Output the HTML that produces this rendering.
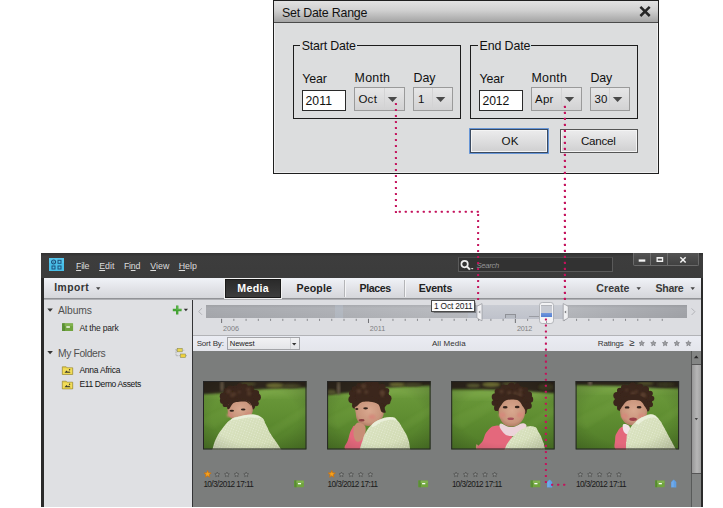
<!DOCTYPE html>
<html lang="en"><head><meta charset="utf-8"><title>Set Date Range</title>
<style>
html,body{margin:0;padding:0;background:#fff;}
body{width:723px;height:508px;overflow:hidden;position:relative;font-family:"Liberation Sans",sans-serif;}
.t{position:absolute;white-space:nowrap;line-height:1;}
.b{position:absolute;box-sizing:border-box;}
svg{position:absolute;overflow:visible;}
u{text-decoration:underline;}

</style></head>
<body>
<div class="b" style="left:273px;top:0px;width:386px;height:174px;background:#dcddde;border:1.2px solid #1e1e1e;box-shadow:inset 0 0 0 1px #eeeeef;"></div>
<div class="b" style="left:274px;top:1px;width:384px;height:22px;background:linear-gradient(#e2e2e2,#d0d0d0 45%,#a4a4a4);border-bottom:1px solid #4a4a4a;"></div>
<span class="t" id="t0" style="left:282.00px;top:7.10px;font-size:12.4px;color:#111;letter-spacing:-0.212px;">Set Date Range</span>
<svg style="left:639px;top:5px" width="13" height="14"><svg x="0.30" y="0.80" width="11.5" height="11.3" viewBox="0 0 11.5 11.3" overflow="visible"><path d="M1.1 1.1 L10.4 10.2 M10.4 1.1 L1.1 10.2" stroke="#262626" stroke-width="2.5" fill="none"/></svg></svg>
<div class="b" style="left:293px;top:45px;width:168px;height:74px;border:1.3px solid #1c1c1c;"></div>
<div class="b" style="left:300.3px;top:43px;width:56.3px;height:5px;background:#dcddde;"></div>
<span class="t" id="t1" style="left:301.80px;top:39.50px;font-size:12.4px;color:#111;letter-spacing:-0.190px;">Start Date</span>
<div class="b" style="left:470px;top:45px;width:168px;height:74px;border:1.3px solid #1c1c1c;"></div>
<div class="b" style="left:478.0px;top:43px;width:53.3px;height:5px;background:#dcddde;"></div>
<span class="t" id="t2" style="left:479.50px;top:39.50px;font-size:12.4px;color:#111;letter-spacing:-0.096px;">End Date</span>
<span class="t" id="t3" style="left:302.30px;top:72.60px;font-size:12.4px;color:#111;letter-spacing:-0.112px;">Year</span>
<span class="t" id="t4" style="left:354.60px;top:71.80px;font-size:12.4px;color:#111;letter-spacing:0.233px;">Month</span>
<span class="t" id="t5" style="left:413.60px;top:71.80px;font-size:12.4px;color:#111;letter-spacing:-0.149px;">Day</span>
<div class="b" style="left:302px;top:90px;width:44px;height:21px;border:1px solid #2a2a2a;background:#fff;"></div>
<span class="t" id="t6" style="left:305.50px;top:95.37px;font-size:12.2px;color:#111;letter-spacing:0.095px;">2011</span>
<div class="b" style="left:354px;top:87px;width:51px;height:24px;border:1px solid #9a9a9a;background:linear-gradient(#e6e6e7,#dcdcdd 50%,#d2d2d3);"></div>
<div class="b" style="left:384px;top:88px;width:1px;height:22px;background:#d3d3d4;"></div>
<span class="t" id="t7" style="left:358.40px;top:93.57px;font-size:11.5px;color:#111;letter-spacing:0.270px;">Oct</span>
<svg style="left:387px;top:97px" width="12" height="6"><svg x="0.80" y="0.00" width="9.4" height="5" viewBox="0 0 9.4 5" overflow="visible"><path d="M0 0 H9.4 L4.7 5 Z" fill="#4a4a4a"/></svg></svg>
<div class="b" style="left:413px;top:87px;width:40px;height:24px;border:1px solid #9a9a9a;background:linear-gradient(#e6e6e7,#dcdcdd 50%,#d2d2d3);"></div>
<div class="b" style="left:432px;top:88px;width:1px;height:22px;background:#d3d3d4;"></div>
<span class="t" id="t8" style="left:418.00px;top:93.57px;font-size:11.5px;color:#111;">1</span>
<svg style="left:435px;top:97px" width="12" height="6"><svg x="0.90" y="0.00" width="9.4" height="5" viewBox="0 0 9.4 5" overflow="visible"><path d="M0 0 H9.4 L4.7 5 Z" fill="#4a4a4a"/></svg></svg>
<span class="t" id="t9" style="left:479.50px;top:72.60px;font-size:12.4px;color:#111;letter-spacing:-0.112px;">Year</span>
<span class="t" id="t10" style="left:531.50px;top:71.80px;font-size:12.4px;color:#111;letter-spacing:0.233px;">Month</span>
<span class="t" id="t11" style="left:590.50px;top:71.80px;font-size:12.4px;color:#111;letter-spacing:-0.149px;">Day</span>
<div class="b" style="left:479px;top:90px;width:44px;height:21px;border:1px solid #2a2a2a;background:#fff;"></div>
<span class="t" id="t12" style="left:482.50px;top:95.37px;font-size:12.2px;color:#111;letter-spacing:-0.131px;">2012</span>
<div class="b" style="left:531px;top:87px;width:51px;height:24px;border:1px solid #9a9a9a;background:linear-gradient(#e6e6e7,#dcdcdd 50%,#d2d2d3);"></div>
<div class="b" style="left:561px;top:88px;width:1px;height:22px;background:#d3d3d4;"></div>
<span class="t" id="t13" style="left:535.00px;top:93.57px;font-size:11.5px;color:#111;letter-spacing:0.231px;">Apr</span>
<svg style="left:564px;top:97px" width="12" height="6"><svg x="0.80" y="0.00" width="9.4" height="5" viewBox="0 0 9.4 5" overflow="visible"><path d="M0 0 H9.4 L4.7 5 Z" fill="#4a4a4a"/></svg></svg>
<div class="b" style="left:590px;top:87px;width:40px;height:24px;border:1px solid #9a9a9a;background:linear-gradient(#e6e6e7,#dcdcdd 50%,#d2d2d3);"></div>
<div class="b" style="left:609px;top:88px;width:1px;height:22px;background:#d3d3d4;"></div>
<span class="t" id="t14" style="left:594.50px;top:93.57px;font-size:11.5px;color:#111;">30</span>
<svg style="left:612px;top:97px" width="12" height="6"><svg x="0.90" y="0.00" width="9.4" height="5" viewBox="0 0 9.4 5" overflow="visible"><path d="M0 0 H9.4 L4.7 5 Z" fill="#4a4a4a"/></svg></svg>
<div class="b" style="left:469.5px;top:128.7px;width:78.8px;height:24.3px;border:1px solid #3b4a60;box-shadow:0 0 0 .9px #5a8ed6,inset 0 0 0 1px #f4f4f4;background:linear-gradient(#ececed,#dededf 50%,#cfcfd0);"></div>
<span class="t" id="t15" style="left:501.50px;top:135.18px;font-size:11.6px;color:#111;letter-spacing:0.167px;">OK</span>
<div class="b" style="left:560px;top:128.7px;width:78px;height:24px;border:1px solid #555;background:linear-gradient(#ececed,#dededf 50%,#cfcfd0);box-shadow:inset 0 0 0 1px #f4f4f4;"></div>
<span class="t" id="t16" style="left:581.00px;top:135.18px;font-size:11.6px;color:#111;letter-spacing:-0.249px;">Cancel</span>
<div class="b" style="left:41.2px;top:253.2px;width:661.8px;height:253.40000000000003px;background:#2b2b2b;"></div>
<div class="b" style="left:41.2px;top:253.2px;width:661.8px;height:24.6px;background:linear-gradient(#303030,#3d3d3d 14%,#3b3b3b);"></div>
<svg style="left:49px;top:258px" width="15" height="13" viewBox="0 0 15 13"><rect width="15" height="13" fill="#48bfe9"/><rect width="15" height="5" fill="#5fcbf0" opacity=".6"/><g fill="none" stroke="#1d4f7a" stroke-width="1"><circle cx="4.6" cy="4" r="2" stroke-width="1.2"/><circle cx="4.6" cy="4" r=".6" fill="#1d4f7a" stroke="none"/><rect x="9" y="2.3" width="3" height="3"/><rect x="3" y="8" width="3" height="3"/><rect x="9" y="8" width="3" height="3"/></g></svg>
<span class="t" id="t17" style="left:76.10px;top:261.65px;font-size:8.8px;color:#dcdcdc;letter-spacing:-0.297px;"><u>F</u>ile</span>
<span class="t" id="t18" style="left:99.20px;top:261.65px;font-size:8.8px;color:#dcdcdc;letter-spacing:0.032px;"><u>E</u>dit</span>
<span class="t" id="t19" style="left:123.90px;top:261.65px;font-size:8.8px;color:#dcdcdc;letter-spacing:-0.210px;">Fi<u>n</u>d</span>
<span class="t" id="t20" style="left:150.30px;top:261.65px;font-size:8.8px;color:#dcdcdc;letter-spacing:0.020px;"><u>V</u>iew</span>
<span class="t" id="t21" style="left:178.70px;top:261.65px;font-size:8.8px;color:#dcdcdc;letter-spacing:0.023px;"><u>H</u>elp</span>
<div class="b" style="left:457.5px;top:257.2px;width:155px;height:15.2px;background:#323232;border:1px solid #5a5a5a;border-top-color:#4a4a4a;"></div>
<svg style="left:460px;top:259px" width="16" height="14"><svg x="0.30" y="0.80" width="14" height="12" viewBox="0 0 14 12" overflow="visible"><circle cx="4.3" cy="4.3" r="3.2" fill="none" stroke="#ececec" stroke-width="1.7"/><path d="M6.6 6.6 L9.6 9.8" stroke="#ececec" stroke-width="2.1"/><path d="M10.6 8.2 h2.6 l-1.3 1.6z" fill="#ddd"/></svg></svg>
<span class="t" id="t22" style="left:476.40px;top:261.77px;font-size:7.6px;color:#959595;letter-spacing:-0.244px;font-style:italic;">Search</span>
<div class="b" style="left:632.5px;top:253px;width:66.5px;height:12.5px;background:linear-gradient(#535353,#414141);border:1px solid #6a6a6a;border-top:none;border-radius:0 0 2px 2px;"></div>
<div class="b" style="left:650px;top:253px;width:1px;height:12px;background:#6e6e6e;"></div>
<div class="b" style="left:667px;top:253px;width:1px;height:12px;background:#6e6e6e;"></div>
<svg style="left:638px;top:259px" width="9" height="4"><svg x="0.70" y="0.40" width="6.6" height="2.3" viewBox="0 0 6.6 2.3" overflow="visible"><rect width="6.6" height="2.3" fill="#f2f2f2"/></svg></svg>
<svg style="left:656px;top:257px" width="9" height="6"><svg x="0.50" y="0.10" width="6.7" height="4.8" viewBox="0 0 6.7 4.8" overflow="visible"><path d="M0 0H6.7V4.8H0Z M1.3 1.6V3.5H5.4V1.6Z" fill="#f2f2f2" fill-rule="evenodd"/></svg></svg>
<svg style="left:679px;top:256px" width="9" height="9"><svg x="0.20" y="0.80" width="7.6" height="6.2" viewBox="0 0 8 7" overflow="visible"><path d="M1 0.6 L7 6.4 M7 0.6 L1 6.4" stroke="#f4f4f4" stroke-width="1.7" fill="none"/></svg></svg>
<div class="b" style="left:43.7px;top:277.7px;width:657.3px;height:21px;background:linear-gradient(#f0f2f7,#e3e4e9 45%,#d4d5d9);"></div>
<div class="b" style="left:43.5px;top:298px;width:657.5px;height:2px;background:linear-gradient(#88898d,#9a9b9f 50%,#c4c5c9);"></div>
<span class="t" id="t23" style="left:54.20px;top:283.18px;font-size:10.3px;color:#333;font-weight:bold;letter-spacing:0.476px;">Import</span>
<svg style="left:96px;top:287px" width="6" height="4"><svg x="0.00" y="0.30" width="4.4" height="2.6" viewBox="0 0 4.4 2.6" overflow="visible"><path d="M0 0H4.4L2.2 2.6Z" fill="#444"/></svg></svg>
<div class="b" style="left:225px;top:278.5px;width:56px;height:19.5px;background:linear-gradient(#2a2a2a,#3d3d3d);border:1px solid #1a1a1a;box-shadow:0 0 0 1px #f2f2f2;"></div>
<span class="t" id="t24" style="left:237.30px;top:283.43px;font-size:10.6px;color:#fff;font-weight:bold;letter-spacing:0.334px;">Media</span>
<span class="t" id="t25" style="left:296.50px;top:283.43px;font-size:10.6px;color:#222;font-weight:bold;letter-spacing:0.125px;">People</span>
<span class="t" id="t26" style="left:359.50px;top:283.43px;font-size:10.6px;color:#222;font-weight:bold;letter-spacing:-0.363px;">Places</span>
<span class="t" id="t27" style="left:418.70px;top:283.43px;font-size:10.6px;color:#222;font-weight:bold;letter-spacing:-0.225px;">Events</span>
<div class="b" style="left:344.3px;top:280px;width:1px;height:17px;background:#b4b5b8;"></div>
<div class="b" style="left:345.3px;top:280px;width:1px;height:17px;background:#f4f4f6;"></div>
<div class="b" style="left:404.0px;top:280px;width:1px;height:17px;background:#b4b5b8;"></div>
<div class="b" style="left:405.0px;top:280px;width:1px;height:17px;background:#f4f4f6;"></div>
<span class="t" id="t28" style="left:596.30px;top:282.83px;font-size:10.6px;color:#3a3a3a;font-weight:bold;letter-spacing:0.036px;">Create</span>
<svg style="left:636px;top:287px" width="6" height="4"><svg x="0.50" y="0.30" width="4.4" height="2.6" viewBox="0 0 4.4 2.6" overflow="visible"><path d="M0 0H4.4L2.2 2.6Z" fill="#444"/></svg></svg>
<span class="t" id="t29" style="left:655.60px;top:282.83px;font-size:10.6px;color:#3a3a3a;font-weight:bold;letter-spacing:-0.331px;">Share</span>
<svg style="left:690px;top:287px" width="6" height="4"><svg x="0.50" y="0.30" width="4.4" height="2.6" viewBox="0 0 4.4 2.6" overflow="visible"><path d="M0 0H4.4L2.2 2.6Z" fill="#444"/></svg></svg>
<div class="b" style="left:43.5px;top:299.5px;width:149px;height:207px;background:#dfe0e3;"></div>
<div class="b" style="left:191.9px;top:299.5px;width:1.2px;height:207px;background:#343436;"></div>
<svg style="left:47px;top:308px" width="7" height="5"><svg x="0.30" y="0.60" width="5.6" height="3.2" viewBox="0 0 5.6 3.2" overflow="visible"><path d="M0 0H5.6L2.8 3.2Z" fill="#333"/></svg></svg>
<span class="t" id="t30" style="left:58.10px;top:305.78px;font-size:10.3px;color:#505050;letter-spacing:-0.091px;">Albums</span>
<svg style="left:47px;top:351px" width="7" height="5"><svg x="0.30" y="0.00" width="5.6" height="3.2" viewBox="0 0 5.6 3.2" overflow="visible"><path d="M0 0H5.6L2.8 3.2Z" fill="#333"/></svg></svg>
<span class="t" id="t31" style="left:58.10px;top:348.58px;font-size:10.3px;color:#505050;letter-spacing:-0.382px;">My Folders</span>
<svg style="left:62px;top:323px" width="13" height="10"><svg x="0.10" y="0.30" width="11" height="7.7" viewBox="0 0 11 7.7" overflow="visible"><rect width="11" height="7.7" rx="0.5" fill="#70a43e"/><rect x="0" y="0" width="2.1" height="7.7" fill="#5a8f36"/><rect x="1.9" y="0" width=".5" height="7.7" fill="#4a7a2c"/><rect x="2.4" y="0.3" width="8.3" height="2.6" fill="#8cbc5a" opacity=".6"/><rect x="4.2" y="3" width="3.6" height="1.4" fill="#fff"/></svg></svg>
<span class="t" id="t32" style="left:79.40px;top:323.80px;font-size:8.5px;color:#222;letter-spacing:-0.183px;">At the park</span>
<svg style="left:62px;top:365px" width="12" height="11"><svg x="0.00" y="0.80" width="11" height="9" viewBox="0 0 11 9" overflow="visible"><path d="M0.3 1 H4.2 L5 2 H10.7 V8.7 H0.3Z" fill="#e8cf45" stroke="#8c7a22" stroke-width=".6"/><rect x="1" y="2.6" width="9" height="5.4" fill="#f1dc58"/><path d="M2.5 7 L4.5 4.8 L6 6.2 L7 5.4 L8.6 7Z" fill="#3a3a2a"/><circle cx="7.6" cy="4" r=".7" fill="#3a3a2a"/></svg></svg>
<span class="t" id="t33" style="left:79.40px;top:365.70px;font-size:8.5px;color:#141414;letter-spacing:-0.235px;">Anna Africa</span>
<svg style="left:62px;top:380px" width="12" height="11"><svg x="0.00" y="0.20" width="11" height="9" viewBox="0 0 11 9" overflow="visible"><path d="M0.3 1 H4.2 L5 2 H10.7 V8.7 H0.3Z" fill="#e8cf45" stroke="#8c7a22" stroke-width=".6"/><rect x="1" y="2.6" width="9" height="5.4" fill="#f1dc58"/><path d="M2.5 7 L4.5 4.8 L6 6.2 L7 5.4 L8.6 7Z" fill="#3a3a2a"/><circle cx="7.6" cy="4" r=".7" fill="#3a3a2a"/></svg></svg>
<span class="t" id="t34" style="left:79.40px;top:380.10px;font-size:8.5px;color:#141414;letter-spacing:-0.369px;">E11 Demo Assets</span>
<svg style="left:172px;top:305px" width="17" height="11"><svg x="0.80" y="0.60" width="15" height="9" viewBox="0 0 15 9" overflow="visible"><path d="M3.2 0 H5.6 V3.2 H8.8 V5.6 H5.6 V8.8 H3.2 V5.6 H0 V3.2 H3.2Z" fill="#44a234"/><path d="M3.5 0.3 H5.3 V3.5 H8.5 V4.4 H3.5Z" fill="#6cc45a" opacity=".5"/><path d="M11 3.2 h4.2 l-2.1 2.4z" fill="#2e2e2e"/></svg></svg>
<svg style="left:175px;top:348px" width="12" height="10" viewBox="0 0 12 10"><rect x="2.2" y="0.4" width="5" height="3.4" fill="#ecd64e" stroke="#8d8d50" stroke-width=".6"/><rect x="5.6" y="6" width="5" height="3.4" fill="#f0d23c" stroke="#8d8d50" stroke-width=".6"/><path d="M1 1 V7.7 H5.2 M1 2.2 H2 M7.6 2.2 H9.4 M11 7.7 h1" stroke="#8a8a8a" stroke-width=".7" stroke-dasharray=".9 .7" fill="none"/></svg>
<div class="b" style="left:193.1px;top:299.5px;width:507.9px;height:36px;background:#dcdde1;"></div>
<svg style="left:198px;top:307px" width="6" height="10"><svg x="0.00" y="0.80" width="4.4" height="7.4" viewBox="0 0 4.4 7.4" overflow="visible"><path d="M4 0.4 L0.7 3.7 L4 7" fill="none" stroke="#b2b3b8" stroke-width="1"/></svg></svg>
<svg style="left:691px;top:308px" width="6" height="9"><svg x="0.20" y="0.00" width="4.4" height="7.4" viewBox="0 0 4.4 7.4" overflow="visible"><path d="M0.4 0.4 L3.7 3.7 L0.4 7" fill="none" stroke="#b2b3b8" stroke-width="1"/></svg></svg>
<div class="b" style="left:206px;top:305px;width:275px;height:13px;background:linear-gradient(rgba(0,0,0,.06),rgba(0,0,0,0) 25%,rgba(0,0,0,.03)),linear-gradient(90deg,#a8aaaf,#b0b2b7 45%,#bcbec3);"></div>
<div class="b" style="left:563px;top:305px;width:123.5px;height:13px;background:linear-gradient(rgba(0,0,0,.06),rgba(0,0,0,0) 25%,rgba(0,0,0,.03)),linear-gradient(90deg,#b7b9be,#aaacb1 60%,#a3a5aa);"></div>
<div class="b" style="left:334.5px;top:305px;width:8.5px;height:13px;background:rgba(190,202,218,.3);"></div>
<div class="b" style="left:468px;top:305px;width:13px;height:13px;background:rgba(190,202,218,.28);"></div>
<div class="b" style="left:481px;top:305px;width:82.5px;height:13.8px;background:linear-gradient(#c9ccd3,#bfc2cb);"></div>
<div class="b" style="left:505px;top:313.9px;width:10.8px;height:4.6px;border:1px solid #8f9197;border-bottom:none;background:#b6bac2;"></div>
<div class="b" style="left:529px;top:315.6px;width:10.4px;height:1.6px;background:#9a9ca3;"></div>
<svg style="left:0;top:0" width="723" height="508"><rect x="221.10" y="318.8" width="1" height="4.2" fill="#707175"/><rect x="233.34" y="318.8" width="1" height="2.1" fill="#88898d"/><rect x="245.58" y="318.8" width="1" height="2.1" fill="#88898d"/><rect x="257.82" y="318.8" width="1" height="2.1" fill="#88898d"/><rect x="270.06" y="318.8" width="1" height="2.1" fill="#88898d"/><rect x="282.30" y="318.8" width="1" height="2.1" fill="#88898d"/><rect x="294.54" y="318.8" width="1" height="2.1" fill="#88898d"/><rect x="306.78" y="318.8" width="1" height="2.1" fill="#88898d"/><rect x="319.02" y="318.8" width="1" height="2.1" fill="#88898d"/><rect x="331.26" y="318.8" width="1" height="2.1" fill="#88898d"/><rect x="343.50" y="318.8" width="1" height="2.1" fill="#88898d"/><rect x="355.74" y="318.8" width="1" height="2.1" fill="#88898d"/><rect x="367.98" y="318.8" width="1" height="4.2" fill="#707175"/><rect x="380.22" y="318.8" width="1" height="2.1" fill="#88898d"/><rect x="392.46" y="318.8" width="1" height="2.1" fill="#88898d"/><rect x="404.70" y="318.8" width="1" height="2.1" fill="#88898d"/><rect x="416.94" y="318.8" width="1" height="2.1" fill="#88898d"/><rect x="429.18" y="318.8" width="1" height="2.1" fill="#88898d"/><rect x="441.42" y="318.8" width="1" height="2.1" fill="#88898d"/><rect x="453.66" y="318.8" width="1" height="2.1" fill="#88898d"/><rect x="465.90" y="318.8" width="1" height="2.1" fill="#88898d"/><rect x="478.14" y="318.8" width="1" height="2.1" fill="#88898d"/><rect x="490.38" y="318.8" width="1" height="2.1" fill="#88898d"/><rect x="502.62" y="318.8" width="1" height="2.1" fill="#88898d"/><rect x="514.86" y="318.8" width="1" height="4.2" fill="#707175"/><rect x="527.10" y="318.8" width="1" height="2.1" fill="#88898d"/><rect x="563.82" y="318.8" width="1" height="2.1" fill="#88898d"/><rect x="576.06" y="318.8" width="1" height="2.1" fill="#88898d"/><rect x="588.30" y="318.8" width="1" height="2.1" fill="#88898d"/><rect x="600.54" y="318.8" width="1" height="2.1" fill="#88898d"/><rect x="612.78" y="318.8" width="1" height="2.1" fill="#88898d"/><rect x="625.02" y="318.8" width="1" height="2.1" fill="#88898d"/><rect x="637.26" y="318.8" width="1" height="2.1" fill="#88898d"/><rect x="649.50" y="318.8" width="1" height="2.1" fill="#88898d"/><rect x="661.74" y="318.8" width="1" height="2.1" fill="#88898d"/></svg>
<span class="t" id="t35" style="left:222.90px;top:324.51px;font-size:7.2px;color:#7e7f83;letter-spacing:0.050px;">2006</span>
<span class="t" id="t36" style="left:369.80px;top:324.51px;font-size:7.2px;color:#7e7f83;letter-spacing:0.033px;">2011</span>
<span class="t" id="t37" style="left:516.90px;top:324.51px;font-size:7.2px;color:#7e7f83;letter-spacing:-0.175px;">2012</span>
<svg style="left:476px;top:303px" width="8" height="20"><svg x="0.40" y="0.20" width="6" height="18" viewBox="0 0 6 18" overflow="visible"><path d="M5.6 0.4 V17.6 L1.4 15.4 Q0.5 14.8 0.5 13.6 V4.4 Q0.5 3.2 1.4 2.6Z" fill="#f1f1f3" stroke="#9a9ca1" stroke-width=".8"/><path d="M3.9 7.2 L2 8.8 L3.9 10.4Z" fill="#8a8b8f"/></svg></svg>
<svg style="left:562px;top:303px" width="8" height="20"><svg x="0.80" y="0.20" width="6" height="18" viewBox="0 0 6 18" overflow="visible"><path d="M0.4 0.4 V17.6 L4.6 15.4 Q5.5 14.8 5.5 13.6 V4.4 Q5.5 3.2 4.6 2.6Z" fill="#f1f1f3" stroke="#9a9ca1" stroke-width=".8"/><path d="M3.4 7.2 L1.5 8.8 L3.4 10.4Z" fill="#77787c"/></svg></svg>
<div class="b" style="left:539.2px;top:302.4px;width:15.2px;height:21.8px;border:1.2px solid #b3b5ba;border-radius:3.2px;background:#f3f3f5;"></div>
<div class="b" style="left:541.3px;top:304.6px;width:11px;height:8.6px;background:#c7cad2;border-top:1px solid #b2b4ba;"></div>
<div class="b" style="left:541.3px;top:313px;width:11px;height:4.4px;background:linear-gradient(#7397dd,#5580d1);"></div>
<div class="b" style="left:546.3px;top:320.5px;width:1px;height:2px;background:#9a9ba0;"></div>
<div class="b" style="left:431px;top:300px;width:44px;height:12px;background:#fdfdfd;border:1px solid #4a4a4a;box-shadow:0.5px 0.5px 1px rgba(0,0,0,.35);"></div>
<span class="t" id="t38" style="left:433.90px;top:302.19px;font-size:8.4px;color:#222;letter-spacing:-0.166px;">1 Oct 2011</span>
<div class="b" style="left:193.1px;top:335px;width:507.9px;height:16px;background:linear-gradient(#eaecf3,#e4e5eb);border-top:1px solid #b2b3b7;"></div>
<span class="t" id="t39" style="left:196.70px;top:339.73px;font-size:8px;color:#333;letter-spacing:-0.182px;">Sort By:</span>
<div class="b" style="left:227.3px;top:337px;width:72.7px;height:13px;background:linear-gradient(#f2f2f4,#e4e5e8);border:1px solid #a3a4a8;"></div>
<div class="b" style="left:289.5px;top:338px;width:1px;height:11px;background:#d2d3d6;"></div>
<span class="t" id="t40" style="left:229.80px;top:339.87px;font-size:7.6px;color:#222;letter-spacing:-0.088px;">Newest</span>
<svg style="left:292px;top:343px" width="4.4" height="2.6" viewBox="0 0 4.4 2.6"><path d="M0 0H4.4L2.2 2.6Z" fill="#333"/></svg>
<span class="t" id="t41" style="left:431.90px;top:339.73px;font-size:8px;color:#333;letter-spacing:0.110px;">All Media</span>
<span class="t" id="t42" style="left:597.80px;top:339.73px;font-size:8px;color:#333;letter-spacing:-0.189px;">Ratings</span>
<span class="t" id="t43" style="left:629.30px;top:338.27px;font-size:9.6px;color:#2e2e2e;">≥</span>
<svg style="left:0;top:0" width="723" height="508"><polygon points="641.70,340.70 642.44,342.48 644.36,342.63 642.90,343.89 643.35,345.77 641.70,344.76 640.05,345.77 640.50,343.89 639.04,342.63 640.96,342.48" fill="#9c9da1" stroke="#808185" stroke-width=".75" stroke-linejoin="round"/><polygon points="653.40,340.70 654.14,342.48 656.06,342.63 654.60,343.89 655.05,345.77 653.40,344.76 651.75,345.77 652.20,343.89 650.74,342.63 652.66,342.48" fill="#9c9da1" stroke="#808185" stroke-width=".75" stroke-linejoin="round"/><polygon points="665.10,340.70 665.84,342.48 667.76,342.63 666.30,343.89 666.75,345.77 665.10,344.76 663.45,345.77 663.90,343.89 662.44,342.63 664.36,342.48" fill="#9c9da1" stroke="#808185" stroke-width=".75" stroke-linejoin="round"/><polygon points="676.80,340.70 677.54,342.48 679.46,342.63 678.00,343.89 678.45,345.77 676.80,344.76 675.15,345.77 675.60,343.89 674.14,342.63 676.06,342.48" fill="#9c9da1" stroke="#808185" stroke-width=".75" stroke-linejoin="round"/><polygon points="688.50,340.70 689.24,342.48 691.16,342.63 689.70,343.89 690.15,345.77 688.50,344.76 686.85,345.77 687.30,343.89 685.84,342.63 687.76,342.48" fill="#9c9da1" stroke="#808185" stroke-width=".75" stroke-linejoin="round"/></svg>
<div class="b" style="left:193.1px;top:351px;width:507.9px;height:155.5px;background:#7b7d7c;"></div>
<div class="b" style="left:691px;top:351px;width:10px;height:155.5px;background:#838584;border-left:1px solid #585a59;"></div>
<svg style="left:693px;top:355px" width="7" height="5"><svg x="0.90" y="0.60" width="4.7" height="2.6" viewBox="0 0 4.7 2.6" overflow="visible"><path d="M0 2.6H4.7L2.35 0Z" fill="#262626"/></svg></svg>
<div class="b" style="left:691px;top:364px;width:10px;height:109.5px;background:linear-gradient(90deg,#979797,#b6b6b6 55%,#a2a2a2);border:1px solid #555;border-right:none;"></div>
<svg style="left:694px;top:418px" width="6" height="4"><svg x="0.60" y="0.00" width="3.4" height="2.2" viewBox="0 0 3.4 2.2" overflow="visible"><path d="M0 0H3.4L1.7 2.2Z" fill="#444"/></svg></svg>
<svg width="0" height="0" style="left:0;top:0"><defs><filter id="bl0" x="-20%" y="-20%" width="140%" height="140%"><feGaussianBlur stdDeviation="0.45"/></filter><filter id="bl1" x="-20%" y="-20%" width="140%" height="140%"><feGaussianBlur stdDeviation="0.8"/></filter><filter id="bl2" x="-30%" y="-30%" width="160%" height="160%"><feGaussianBlur stdDeviation="1.7"/></filter><filter id="bl3" x="-30%" y="-30%" width="160%" height="160%"><feGaussianBlur stdDeviation="3"/></filter><linearGradient id="gr" x1="0" y1="0" x2="0" y2="1"><stop offset="0" stop-color="#709e3e"/><stop offset=".5" stop-color="#608e32"/><stop offset="1" stop-color="#507c28"/></linearGradient><linearGradient id="bk" x1="0" y1="0" x2="1" y2="1"><stop offset="0" stop-color="#dde5c6"/><stop offset=".6" stop-color="#d0dab2"/><stop offset="1" stop-color="#c2cfa2"/></linearGradient><pattern id="dt" width="2.6" height="2.6" patternUnits="userSpaceOnUse" patternTransform="rotate(20)"><circle cx="1.3" cy="1.3" r=".55" fill="#f4f7ea"/></pattern><radialGradient id="vg" cx=".5" cy=".5" r=".75"><stop offset=".55" stop-color="#000" stop-opacity="0"/><stop offset="1" stop-color="#000" stop-opacity=".22"/></radialGradient><radialGradient id="sk" cx=".5" cy=".45" r=".6"><stop offset="0" stop-color="#d9a88f"/><stop offset=".7" stop-color="#c9957c"/><stop offset="1" stop-color="#a8735c"/></radialGradient></defs></svg>
<svg style="left:203.0px;top:381px" width="103.5" height="68.5" viewBox="0 0 103.5 68.5"><defs><clipPath id="pc1"><rect width="103.5" height="68.5"/></clipPath></defs><g clip-path="url(#pc1)"><rect width="103.5" height="68.5" fill="url(#gr)"/><path d="M-5 40 L60 8 L75 8 L10 48Z M30 70 L108 22 L108 30 L48 70Z" fill="#8ab554" opacity=".13" filter="url(#bl2)"/><ellipse cx="50.0" cy="10.0" rx="60" ry="5" fill="#7aa646" filter="url(#bl3)"/><path d="M-3 -3 L107 -3 L107 6.5 L70 7.5 L50 9 L30 11.5 L-3 13.5Z" fill="#2e281b" filter="url(#bl1)" /><ellipse cx="72.0" cy="4.5" rx="9" ry="2.6" fill="#6b6a33" filter="url(#bl1)"/><ellipse cx="88.0" cy="5.0" rx="10" ry="2.2" fill="#4d4c2a" filter="url(#bl1)"/><ellipse cx="19.0" cy="5.0" rx="1.6" ry="6" fill="#6b5d48" filter="url(#bl1)"/><ellipse cx="45.0" cy="3.0" rx="8" ry="2" fill="#4a4526" filter="url(#bl1)"/><ellipse cx="37.2" cy="17.0" rx="18.6" ry="13.020000000000001" fill="#3b271b" filter="url(#bl0)"/><circle cx="54.3" cy="16.2" r="3.6" fill="#3b271b" filter="url(#bl0)"/><circle cx="52.9" cy="22.3" r="2.9" fill="#3b271b" filter="url(#bl0)"/><circle cx="48.9" cy="25.5" r="3.1" fill="#3b271b" filter="url(#bl0)"/><circle cx="42.0" cy="27.7" r="3.5" fill="#3b271b" filter="url(#bl0)"/><circle cx="36.8" cy="28.9" r="2.6" fill="#3b271b" filter="url(#bl0)"/><circle cx="27.5" cy="26.6" r="3.1" fill="#3b271b" filter="url(#bl0)"/><circle cx="22.2" cy="23.5" r="2.6" fill="#3b271b" filter="url(#bl0)"/><circle cx="20.4" cy="19.5" r="3.5" fill="#3b271b" filter="url(#bl0)"/><circle cx="20.4" cy="15.3" r="3.7" fill="#3b271b" filter="url(#bl0)"/><circle cx="23.6" cy="9.3" r="2.6" fill="#3b271b" filter="url(#bl0)"/><circle cx="27.1" cy="7.7" r="3.2" fill="#3b271b" filter="url(#bl0)"/><circle cx="36.9" cy="5.4" r="3.1" fill="#3b271b" filter="url(#bl0)"/><circle cx="41.7" cy="5.9" r="3.1" fill="#3b271b" filter="url(#bl0)"/><circle cx="47.8" cy="7.6" r="2.9" fill="#3b271b" filter="url(#bl0)"/><circle cx="53.0" cy="12.2" r="3.2" fill="#3b271b" filter="url(#bl0)"/><circle cx="31.7" cy="12.9" r="1.7" fill="#5d4230" opacity=".7" filter="url(#bl1)"/><circle cx="36.2" cy="11.0" r="1.5" fill="#5d4230" opacity=".7" filter="url(#bl1)"/><circle cx="46.2" cy="12.5" r="2.2" fill="#5d4230" opacity=".7" filter="url(#bl1)"/><circle cx="25.6" cy="10.4" r="2.4" fill="#5d4230" opacity=".7" filter="url(#bl1)"/><circle cx="29.3" cy="14.0" r="2.3" fill="#5d4230" opacity=".7" filter="url(#bl1)"/><circle cx="45.3" cy="8.6" r="2.0" fill="#5d4230" opacity=".7" filter="url(#bl1)"/><path d="M24.6 29.0C24.6 26.7 25.0 23.3 27.1 21.6C29.1 19.8 33.8 18.6 37.0 18.6C40.2 18.5 44.0 19.6 46.1 21.2C48.3 22.8 49.5 26.1 49.8 28.2C50.1 30.3 49.3 32.3 48.1 34.0C47.0 35.7 45.4 37.6 42.8 38.5C40.3 39.4 35.6 40.0 32.9 39.5C30.2 39.0 27.9 37.4 26.6 35.7C25.2 33.9 24.5 31.4 24.6 29.0Z" fill="url(#sk)" filter="url(#bl0)" /><path d="M24.2 26.6C24.5 25.2 25.8 21.4 27.9 19.9C30.0 18.4 34.2 17.4 37.0 17.4C39.8 17.4 42.6 18.7 44.5 19.9C46.3 21.1 48.4 24.4 48.1 24.6C47.9 24.7 45.1 21.4 43.2 20.7C41.2 20.1 38.3 20.5 36.2 20.7C34.1 21.0 32.0 20.9 30.4 22.1C28.7 23.3 27.2 27.1 26.2 27.9C25.2 28.6 24.0 27.9 24.2 26.6Z" fill="#3b271b" filter="url(#bl0)" /><ellipse cx="28.8" cy="29.7" rx="2.3" ry="1.0" fill="#33241c" filter="url(#bl0)"/><ellipse cx="40.2" cy="28.5" rx="2.3" ry="1.0" fill="#33241c" filter="url(#bl0)"/><ellipse cx="27.0" cy="34.0" rx="3" ry="2" fill="#d08a7a" filter="url(#bl1)"/><ellipse cx="45.0" cy="33.5" rx="3" ry="2" fill="#d08a7a" filter="url(#bl1)"/><path d="M4.9 81.8C6.1 73.0 7.2 75.2 9.3 68.9C11.4 62.6 10.2 63.8 12.9 58.1C15.7 52.3 15.6 52.5 19.6 47.3C23.6 42.1 23.5 41.7 27.9 38.5C32.3 35.3 30.4 36.7 36.2 35.4C41.9 34.0 43.5 33.2 49.5 33.5C55.4 33.8 55.0 33.9 58.6 36.5C62.1 39.1 60.3 38.7 62.7 43.2C65.2 47.6 64.8 48.2 67.7 53.1C70.6 58.0 70.7 57.2 73.5 61.4C76.4 65.6 75.6 64.5 78.5 68.9C81.4 73.3 82.9 70.1 84.5 77.8C86.1 85.6 105.7 91.4 84.5 97.8C63.3 104.2 26.1 106.1 4.9 101.8C-16.3 97.6 3.7 90.6 4.9 81.8Z" fill="url(#bk)" filter="url(#bl0)" /><path d="M4.9 81.8C6.1 73.0 7.2 75.2 9.3 68.9C11.4 62.6 10.2 63.8 12.9 58.1C15.7 52.3 15.6 52.5 19.6 47.3C23.6 42.1 23.5 41.7 27.9 38.5C32.3 35.3 30.4 36.7 36.2 35.4C41.9 34.0 43.5 33.2 49.5 33.5C55.4 33.8 55.0 33.9 58.6 36.5C62.1 39.1 60.3 38.7 62.7 43.2C65.2 47.6 64.8 48.2 67.7 53.1C70.6 58.0 70.7 57.2 73.5 61.4C76.4 65.6 75.6 64.5 78.5 68.9C81.4 73.3 82.9 70.1 84.5 77.8C86.1 85.6 105.7 91.4 84.5 97.8C63.3 104.2 26.1 106.1 4.9 101.8C-16.3 97.6 3.7 90.6 4.9 81.8Z" fill="url(#dt)" opacity=".55"/><path d="M27.9 38.5C28.2 38.0 32.6 36.2 36.2 35.4C39.8 34.5 45.7 33.3 49.5 33.5C53.2 33.7 57.8 36.0 58.6 36.5C59.4 37.1 56.8 36.8 54.4 36.8C52.1 36.8 47.8 36.2 44.5 36.5C41.2 36.8 37.3 38.2 34.5 38.5C31.8 38.8 27.6 39.0 27.9 38.5Z" fill="#eef2e0" filter="url(#bl0)" opacity=".8"/><rect width="103.5" height="68.5" fill="url(#vg)"/></g><rect x=".5" y=".5" width="102.5" height="67.5" fill="none" stroke="#242424" stroke-width="1"/></svg>
<svg style="left:327px;top:381px" width="105" height="70"><svg x="0.10" y="0.00" width="103.5" height="68.5" viewBox="0 0 103.5 68.5" overflow="visible"><defs><clipPath id="pc2"><rect width="103.5" height="68.5"/></clipPath></defs><g clip-path="url(#pc2)"><rect width="103.5" height="68.5" fill="url(#gr)"/><path d="M-5 40 L60 8 L75 8 L10 48Z M30 70 L108 22 L108 30 L48 70Z" fill="#8ab554" opacity=".13" filter="url(#bl2)"/><ellipse cx="50.0" cy="9.0" rx="60" ry="5" fill="#7aa646" filter="url(#bl3)"/><path d="M-3 -3 L107 -3 L107 4.5 L75 5.5 L55 7 L30 11 L-3 14Z" fill="#2e281b" filter="url(#bl1)" /><ellipse cx="70.0" cy="3.5" rx="8" ry="2" fill="#6b6a33" filter="url(#bl1)"/><ellipse cx="86.0" cy="3.5" rx="9" ry="1.8" fill="#4d4c2a" filter="url(#bl1)"/><ellipse cx="11.5" cy="7.0" rx="1.7" ry="7" fill="#6b5d48" filter="url(#bl1)"/><ellipse cx="4.0" cy="11.0" rx="5" ry="2.5" fill="#5a5a30" filter="url(#bl1)"/><ellipse cx="42.8" cy="16.2" rx="19.53" ry="15.159" fill="#3b271b" filter="url(#bl0)"/><circle cx="60.7" cy="17.4" r="3.7" fill="#3b271b" filter="url(#bl0)"/><circle cx="60.6" cy="20.8" r="2.7" fill="#3b271b" filter="url(#bl0)"/><circle cx="54.1" cy="26.8" r="3.5" fill="#3b271b" filter="url(#bl0)"/><circle cx="48.0" cy="29.6" r="3.0" fill="#3b271b" filter="url(#bl0)"/><circle cx="40.5" cy="29.7" r="3.3" fill="#3b271b" filter="url(#bl0)"/><circle cx="33.2" cy="28.3" r="2.8" fill="#3b271b" filter="url(#bl0)"/><circle cx="28.0" cy="24.5" r="3.1" fill="#3b271b" filter="url(#bl0)"/><circle cx="25.1" cy="18.4" r="3.8" fill="#3b271b" filter="url(#bl0)"/><circle cx="25.2" cy="12.2" r="3.3" fill="#3b271b" filter="url(#bl0)"/><circle cx="27.6" cy="8.1" r="2.9" fill="#3b271b" filter="url(#bl0)"/><circle cx="31.9" cy="4.6" r="2.6" fill="#3b271b" filter="url(#bl0)"/><circle cx="40.7" cy="2.4" r="3.0" fill="#3b271b" filter="url(#bl0)"/><circle cx="48.0" cy="3.4" r="3.7" fill="#3b271b" filter="url(#bl0)"/><circle cx="55.2" cy="6.1" r="3.3" fill="#3b271b" filter="url(#bl0)"/><circle cx="59.6" cy="9.7" r="2.6" fill="#3b271b" filter="url(#bl0)"/><circle cx="39.2" cy="11.0" r="2.1" fill="#5d4230" opacity=".7" filter="url(#bl1)"/><circle cx="55.3" cy="14.6" r="1.7" fill="#5d4230" opacity=".7" filter="url(#bl1)"/><circle cx="55.2" cy="11.5" r="2.3" fill="#5d4230" opacity=".7" filter="url(#bl1)"/><circle cx="55.1" cy="11.9" r="2.4" fill="#5d4230" opacity=".7" filter="url(#bl1)"/><circle cx="36.5" cy="5.1" r="2.6" fill="#5d4230" opacity=".7" filter="url(#bl1)"/><circle cx="31.8" cy="10.2" r="2.3" fill="#5d4230" opacity=".7" filter="url(#bl1)"/><path d="M27.9 24.9C28.6 22.5 30.4 19.5 32.9 18.3C35.4 17.0 39.6 16.6 42.8 17.4C46.0 18.3 49.7 21.0 52.0 23.2C54.2 25.4 55.9 28.5 56.4 30.7C57.0 32.9 56.3 34.7 55.3 36.5C54.2 38.3 52.4 40.1 50.3 41.5C48.2 42.9 45.4 44.5 42.8 44.8C40.2 45.1 36.7 44.5 34.5 43.5C32.4 42.4 30.8 40.4 29.9 38.5C28.9 36.7 29.0 34.6 28.7 32.4C28.4 30.1 27.2 27.2 27.9 24.9Z" fill="url(#sk)" filter="url(#bl0)" /><path d="M27.2 25.7C27.3 24.6 28.0 20.1 30.4 18.3C32.7 16.5 37.4 14.7 41.2 14.9C44.9 15.2 49.9 17.3 52.8 19.9C55.7 22.5 58.3 28.9 58.6 30.7C58.9 32.5 55.7 32.0 54.4 30.7C53.2 29.5 53.1 24.9 51.1 23.2C49.2 21.6 45.6 21.1 42.8 20.7C40.1 20.4 36.7 20.6 34.5 21.2C32.4 21.9 31.1 24.1 29.9 24.9C28.7 25.6 27.1 26.8 27.2 25.7Z" fill="#3b271b" filter="url(#bl0)" /><ellipse cx="29.7" cy="28.0" rx="1.6" ry="1.0" fill="#33241c" filter="url(#bl0)"/><ellipse cx="38.5" cy="27.3" rx="2.4" ry="1.1" fill="#33241c" filter="url(#bl0)"/><ellipse cx="34.5" cy="39.3" rx="3" ry="1.3" fill="#8c3f42" filter="url(#bl0)"/><ellipse cx="45.0" cy="36.0" rx="3.5" ry="2.5" fill="#d58a7c" filter="url(#bl1)"/><path d="M18.8 68.9C15.2 66.0 19.7 63.6 21.2 58.1C22.8 52.6 22.6 51.7 24.6 48.1C26.6 44.6 25.6 44.6 28.7 44.8C31.8 45.0 33.7 45.4 36.2 49.0C38.7 52.5 38.6 52.8 38.2 58.1C37.7 63.4 39.7 66.0 34.5 68.9C29.3 71.8 22.3 71.8 18.8 68.9Z" fill="#e4687c" filter="url(#bl0)" /><path d="M27.6 44.8C28.2 43.8 29.2 42.2 30.4 41.8C31.5 41.4 33.2 41.7 34.5 42.3C35.8 43.0 37.6 44.0 38.2 45.6C38.8 47.3 38.8 50.1 38.2 52.3C37.6 54.5 36.0 57.5 34.5 58.9C33.1 60.3 30.9 61.3 29.5 60.6C28.2 59.9 27.1 56.8 26.6 54.8C26.1 52.7 26.4 49.8 26.6 48.1C26.7 46.5 26.9 45.9 27.6 44.8Z" fill="#c78e76" filter="url(#bl0)" /><path d="M29.1 79.8C30.0 71.6 30.9 74.2 32.5 68.9C34.2 63.5 33.7 64.4 35.4 59.8C37.0 55.1 36.2 55.7 38.7 51.5C41.1 47.2 40.7 47.4 44.5 44.0C48.2 40.5 47.5 40.6 52.8 38.5C58.1 36.4 59.8 35.9 64.4 36.2C69.0 36.4 67.1 36.3 70.2 39.5C73.3 42.7 73.1 43.2 76.0 48.1C78.9 53.1 79.1 52.6 81.0 58.1C82.9 63.6 81.9 62.6 83.2 68.9C84.4 75.2 85.1 73.0 85.7 81.8C86.4 90.6 100.8 97.0 85.7 101.8C70.7 106.6 44.2 105.7 29.1 99.8C14.1 94.0 28.2 88.1 29.1 79.8Z" fill="url(#bk)" filter="url(#bl0)" /><path d="M29.1 79.8C30.0 71.6 30.9 74.2 32.5 68.9C34.2 63.5 33.7 64.4 35.4 59.8C37.0 55.1 36.2 55.7 38.7 51.5C41.1 47.2 40.7 47.4 44.5 44.0C48.2 40.5 47.5 40.6 52.8 38.5C58.1 36.4 59.8 35.9 64.4 36.2C69.0 36.4 67.1 36.3 70.2 39.5C73.3 42.7 73.1 43.2 76.0 48.1C78.9 53.1 79.1 52.6 81.0 58.1C82.9 63.6 81.9 62.6 83.2 68.9C84.4 75.2 85.1 73.0 85.7 81.8C86.4 90.6 100.8 97.0 85.7 101.8C70.7 106.6 44.2 105.7 29.1 99.8C14.1 94.0 28.2 88.1 29.1 79.8Z" fill="url(#dt)" opacity=".55"/><path d="M44.5 44.0C45.4 42.8 49.5 39.8 52.8 38.5C56.1 37.2 61.5 36.0 64.4 36.2C67.3 36.3 70.2 39.1 70.2 39.5C70.2 39.9 67.0 38.3 64.4 38.5C61.8 38.7 57.3 39.5 54.4 40.7C51.5 41.9 48.6 45.1 47.0 45.6C45.3 46.2 43.5 45.2 44.5 44.0Z" fill="#eef2e0" filter="url(#bl0)" opacity=".8"/><rect width="103.5" height="68.5" fill="url(#vg)"/></g><rect x=".5" y=".5" width="102.5" height="67.5" fill="none" stroke="#242424" stroke-width="1"/></svg></svg>
<svg style="left:451px;top:381px" width="105" height="70"><svg x="0.20" y="0.00" width="103.5" height="68.5" viewBox="0 0 103.5 68.5" overflow="visible"><defs><clipPath id="pc3"><rect width="103.5" height="68.5"/></clipPath></defs><g clip-path="url(#pc3)"><rect width="103.5" height="68.5" fill="url(#gr)"/><path d="M-5 40 L60 8 L75 8 L10 48Z M30 70 L108 22 L108 30 L48 70Z" fill="#8ab554" opacity=".13" filter="url(#bl2)"/><ellipse cx="50.0" cy="12.0" rx="60" ry="5" fill="#7aa646" filter="url(#bl3)"/><path d="M-3 -3 L107 -3 L107 12.5 L85 11 L60 9 L30 8.5 L-3 8.5Z" fill="#2e281b" filter="url(#bl1)" /><ellipse cx="40.0" cy="3.5" rx="9" ry="2.4" fill="#6b6a33" filter="url(#bl1)"/><ellipse cx="22.0" cy="4.5" rx="7" ry="2" fill="#5a5a30" filter="url(#bl1)"/><ellipse cx="95.0" cy="6.0" rx="8" ry="3.5" fill="#3d3a22" filter="url(#bl1)"/><ellipse cx="58.0" cy="3.0" rx="7" ry="2" fill="#4d4c2a" filter="url(#bl1)"/><ellipse cx="61.0" cy="19.2" rx="18.879" ry="15.81" fill="#3b271b" filter="url(#bl0)"/><circle cx="78.7" cy="18.4" r="3.3" fill="#3b271b" filter="url(#bl0)"/><circle cx="77.3" cy="24.7" r="3.3" fill="#3b271b" filter="url(#bl0)"/><circle cx="72.8" cy="30.5" r="2.7" fill="#3b271b" filter="url(#bl0)"/><circle cx="68.0" cy="32.1" r="3.6" fill="#3b271b" filter="url(#bl0)"/><circle cx="60.0" cy="33.9" r="2.9" fill="#3b271b" filter="url(#bl0)"/><circle cx="50.6" cy="31.0" r="3.2" fill="#3b271b" filter="url(#bl0)"/><circle cx="46.0" cy="26.9" r="3.2" fill="#3b271b" filter="url(#bl0)"/><circle cx="43.2" cy="21.9" r="2.8" fill="#3b271b" filter="url(#bl0)"/><circle cx="44.1" cy="15.9" r="3.6" fill="#3b271b" filter="url(#bl0)"/><circle cx="46.9" cy="10.8" r="3.5" fill="#3b271b" filter="url(#bl0)"/><circle cx="52.5" cy="6.1" r="2.7" fill="#3b271b" filter="url(#bl0)"/><circle cx="60.1" cy="4.9" r="3.3" fill="#3b271b" filter="url(#bl0)"/><circle cx="65.9" cy="4.9" r="2.6" fill="#3b271b" filter="url(#bl0)"/><circle cx="73.8" cy="9.2" r="3.2" fill="#3b271b" filter="url(#bl0)"/><circle cx="77.2" cy="14.0" r="3.7" fill="#3b271b" filter="url(#bl0)"/><circle cx="69.3" cy="9.2" r="1.9" fill="#5d4230" opacity=".7" filter="url(#bl1)"/><circle cx="68.6" cy="13.6" r="2.5" fill="#5d4230" opacity=".7" filter="url(#bl1)"/><circle cx="67.1" cy="16.4" r="1.6" fill="#5d4230" opacity=".7" filter="url(#bl1)"/><circle cx="50.3" cy="10.5" r="2.0" fill="#5d4230" opacity=".7" filter="url(#bl1)"/><circle cx="64.1" cy="12.3" r="2.1" fill="#5d4230" opacity=".7" filter="url(#bl1)"/><circle cx="58.1" cy="11.8" r="2.1" fill="#5d4230" opacity=".7" filter="url(#bl1)"/><path d="M47.5 28.2C47.7 25.4 48.2 21.9 50.3 19.9C52.4 17.9 56.9 16.3 60.2 16.3C63.6 16.3 67.9 17.9 70.2 19.9C72.5 21.9 73.6 25.4 74.0 28.2C74.4 31.0 73.7 34.0 72.7 36.5C71.6 39.0 69.8 41.6 67.7 43.2C65.6 44.7 62.7 45.6 60.2 45.6C57.8 45.6 54.7 44.7 52.8 43.2C50.8 41.6 49.5 39.0 48.6 36.5C47.7 34.0 47.2 31.0 47.5 28.2Z" fill="url(#sk)" filter="url(#bl0)" /><path d="M46.5 29.0C46.3 27.9 46.3 20.9 48.6 18.3C50.9 15.6 56.2 13.3 60.2 13.3C64.3 13.3 70.2 15.5 72.7 18.3C75.2 21.0 75.3 28.6 75.2 29.9C75.0 31.1 73.1 27.4 71.9 25.7C70.6 24.1 69.7 21.1 67.7 19.9C65.8 18.7 62.6 18.6 60.2 18.6C57.9 18.6 55.4 18.9 53.6 19.9C51.8 21.0 50.7 23.4 49.5 24.9C48.3 26.4 46.6 30.2 46.5 29.0Z" fill="#3b271b" filter="url(#bl0)" /><ellipse cx="54.0" cy="26.2" rx="2.4" ry="1.2" fill="#33241c" filter="url(#bl0)"/><ellipse cx="66.0" cy="26.0" rx="2.4" ry="1.2" fill="#33241c" filter="url(#bl0)"/><ellipse cx="59.5" cy="37.8" rx="3.3" ry="1.3" fill="#a8505a" filter="url(#bl0)"/><ellipse cx="51.0" cy="34.0" rx="3.2" ry="2.6" fill="#d58a7c" filter="url(#bl1)"/><ellipse cx="69.0" cy="34.0" rx="3.2" ry="2.6" fill="#d58a7c" filter="url(#bl1)"/><path d="M25.1 63.4C25.5 62.8 27.0 64.6 27.9 65.6C28.8 66.5 30.8 68.3 30.4 68.9C30.0 69.4 26.3 69.8 25.4 68.9C24.5 68.0 24.6 64.0 25.1 63.4Z" fill="#c78e76" filter="url(#bl0)" /><path d="M28.7 68.9C21.6 66.2 30.0 64.0 32.0 58.9C34.1 53.8 33.2 53.6 36.5 49.8C39.8 46.0 40.4 45.3 44.5 44.8C48.6 44.3 47.5 44.7 52.0 47.8C56.4 50.9 59.3 50.8 61.1 56.4C62.8 62.1 67.2 65.6 58.6 68.9C50.0 72.2 35.8 71.5 28.7 68.9Z" fill="#e4687c" filter="url(#bl0)" /><path d="M49.1 42.8C51.3 41.4 54.1 46.3 60.2 46.1C66.4 46.0 68.5 41.6 72.4 42.3C76.2 43.1 75.7 46.0 74.7 49.0C73.7 51.9 72.4 51.8 68.5 53.4C64.7 55.1 64.7 55.6 60.2 55.1C55.8 54.6 54.9 54.7 52.0 51.5C49.0 48.2 46.9 44.2 49.1 42.8Z" fill="#ecd4da" filter="url(#bl0)" /><path d="M48.5 77.8C49.8 70.1 50.9 73.3 53.1 68.9C55.4 64.5 54.1 65.4 56.9 61.4C59.7 57.4 59.4 57.7 63.6 53.9C67.8 50.2 67.7 49.5 72.7 47.3C77.7 45.1 78.3 44.5 82.3 45.6C86.3 46.7 85.1 47.5 87.6 51.5C90.2 55.4 90.1 55.9 91.8 60.6C93.5 65.2 92.7 64.0 93.9 68.9C95.2 73.7 95.8 70.8 96.5 78.8C97.2 86.8 109.3 93.8 96.5 98.8C83.7 103.9 61.3 103.4 48.5 97.8C35.7 92.2 47.3 85.6 48.5 77.8Z" fill="url(#bk)" filter="url(#bl0)" /><path d="M48.5 77.8C49.8 70.1 50.9 73.3 53.1 68.9C55.4 64.5 54.1 65.4 56.9 61.4C59.7 57.4 59.4 57.7 63.6 53.9C67.8 50.2 67.7 49.5 72.7 47.3C77.7 45.1 78.3 44.5 82.3 45.6C86.3 46.7 85.1 47.5 87.6 51.5C90.2 55.4 90.1 55.9 91.8 60.6C93.5 65.2 92.7 64.0 93.9 68.9C95.2 73.7 95.8 70.8 96.5 78.8C97.2 86.8 109.3 93.8 96.5 98.8C83.7 103.9 61.3 103.4 48.5 97.8C35.7 92.2 47.3 85.6 48.5 77.8Z" fill="url(#dt)" opacity=".55"/><rect width="103.5" height="68.5" fill="url(#vg)"/></g><rect x=".5" y=".5" width="102.5" height="67.5" fill="none" stroke="#242424" stroke-width="1"/></svg></svg>
<svg style="left:575px;top:381px" width="106" height="70"><svg x="0.60" y="0.00" width="103.5" height="68.5" viewBox="0 0 103.5 68.5" overflow="visible"><defs><clipPath id="pc4"><rect width="103.5" height="68.5"/></clipPath></defs><g clip-path="url(#pc4)"><rect width="103.5" height="68.5" fill="url(#gr)"/><path d="M-5 40 L60 8 L75 8 L10 48Z M30 70 L108 22 L108 30 L48 70Z" fill="#8ab554" opacity=".13" filter="url(#bl2)"/><ellipse cx="50.0" cy="7.0" rx="60" ry="4" fill="#7aa646" filter="url(#bl3)"/><path d="M-3 -3 L107 -3 L107 7.5 L80 7 L50 5 L-3 4Z" fill="#2e281b" filter="url(#bl1)" /><ellipse cx="14.5" cy="2.0" rx="2" ry="2.5" fill="#7a6a58" filter="url(#bl1)"/><ellipse cx="90.0" cy="3.5" rx="9" ry="2.5" fill="#3d3a22" filter="url(#bl1)"/><ellipse cx="70.0" cy="2.5" rx="8" ry="1.6" fill="#55522c" filter="url(#bl1)"/><ellipse cx="58.0" cy="18.2" rx="18.786" ry="14.88" fill="#3b271b" filter="url(#bl0)"/><circle cx="76.0" cy="17.5" r="2.7" fill="#3b271b" filter="url(#bl0)"/><circle cx="74.6" cy="23.5" r="2.8" fill="#3b271b" filter="url(#bl0)"/><circle cx="71.0" cy="27.4" r="3.1" fill="#3b271b" filter="url(#bl0)"/><circle cx="62.0" cy="31.0" r="3.6" fill="#3b271b" filter="url(#bl0)"/><circle cx="55.2" cy="31.7" r="2.9" fill="#3b271b" filter="url(#bl0)"/><circle cx="49.0" cy="30.0" r="2.9" fill="#3b271b" filter="url(#bl0)"/><circle cx="44.1" cy="27.0" r="2.7" fill="#3b271b" filter="url(#bl0)"/><circle cx="41.4" cy="21.6" r="3.7" fill="#3b271b" filter="url(#bl0)"/><circle cx="41.3" cy="14.6" r="3.6" fill="#3b271b" filter="url(#bl0)"/><circle cx="44.2" cy="9.5" r="2.8" fill="#3b271b" filter="url(#bl0)"/><circle cx="48.7" cy="6.9" r="3.4" fill="#3b271b" filter="url(#bl0)"/><circle cx="57.0" cy="5.1" r="3.6" fill="#3b271b" filter="url(#bl0)"/><circle cx="64.9" cy="5.4" r="2.7" fill="#3b271b" filter="url(#bl0)"/><circle cx="70.0" cy="8.5" r="3.4" fill="#3b271b" filter="url(#bl0)"/><circle cx="74.4" cy="12.6" r="2.8" fill="#3b271b" filter="url(#bl0)"/><circle cx="57.5" cy="12.8" r="2.5" fill="#5d4230" opacity=".7" filter="url(#bl1)"/><circle cx="67.5" cy="13.7" r="1.8" fill="#5d4230" opacity=".7" filter="url(#bl1)"/><circle cx="68.3" cy="14.6" r="2.5" fill="#5d4230" opacity=".7" filter="url(#bl1)"/><circle cx="66.9" cy="13.5" r="2.0" fill="#5d4230" opacity=".7" filter="url(#bl1)"/><circle cx="60.8" cy="10.6" r="1.7" fill="#5d4230" opacity=".7" filter="url(#bl1)"/><circle cx="51.0" cy="9.1" r="1.5" fill="#5d4230" opacity=".7" filter="url(#bl1)"/><path d="M44.5 28.2C44.8 25.4 45.3 21.9 47.5 19.9C49.7 18.0 54.4 16.6 57.8 16.6C61.1 16.6 65.4 18.0 67.7 19.9C70.0 21.9 71.1 25.4 71.5 28.2C72.0 31.0 71.3 34.2 70.2 36.5C69.2 38.9 67.3 41.0 65.2 42.3C63.2 43.7 60.2 44.5 57.8 44.5C55.3 44.5 52.3 43.7 50.3 42.3C48.3 41.0 46.8 38.9 45.8 36.5C44.8 34.2 44.2 31.0 44.5 28.2Z" fill="url(#sk)" filter="url(#bl0)" /><path d="M43.7 29.0C43.5 27.9 43.8 20.8 46.1 18.3C48.5 15.7 53.7 13.6 57.8 13.6C61.8 13.6 67.7 15.5 70.2 18.3C72.7 21.0 72.8 28.6 72.7 29.9C72.6 31.1 70.6 27.3 69.4 25.7C68.1 24.1 67.2 21.4 65.2 20.2C63.3 19.1 60.1 19.1 57.8 19.1C55.4 19.1 52.9 19.3 51.1 20.2C49.3 21.2 48.2 23.4 47.0 24.9C45.7 26.4 43.8 30.2 43.7 29.0Z" fill="#3b271b" filter="url(#bl0)" /><ellipse cx="51.5" cy="26.4" rx="2.4" ry="1.2" fill="#33241c" filter="url(#bl0)"/><ellipse cx="63.5" cy="26.2" rx="2.4" ry="1.2" fill="#33241c" filter="url(#bl0)"/><ellipse cx="57.5" cy="38.2" rx="3.8" ry="1.7" fill="#9c3f4a" filter="url(#bl0)"/><ellipse cx="49.0" cy="35.0" rx="3.2" ry="2.6" fill="#d58a7c" filter="url(#bl1)"/><ellipse cx="66.0" cy="35.0" rx="3.2" ry="2.6" fill="#d58a7c" filter="url(#bl1)"/><path d="M40.8 68.9C37.5 66.2 39.2 63.8 39.5 58.9C39.8 54.1 39.8 54.2 42.0 50.6C44.2 47.1 44.8 46.1 47.8 45.6C50.8 45.2 52.0 42.8 53.1 49.0C54.2 55.2 55.2 63.6 52.0 68.9C48.7 74.2 44.1 71.5 40.8 68.9Z" fill="#e4687c" filter="url(#bl0)" /><path d="M47.5 43.5C48.3 42.5 51.9 43.4 53.1 44.5C54.3 45.5 55.0 48.3 54.8 49.8C54.6 51.3 53.1 53.3 52.0 53.4C50.8 53.6 48.9 52.3 48.1 50.6C47.4 49.0 46.6 44.5 47.5 43.5Z" fill="#f1e4e8" filter="url(#bl0)" /><path d="M49.7 79.8C49.9 71.6 50.0 74.2 50.3 68.9C50.6 63.5 50.1 64.6 50.8 59.8C51.5 54.9 50.3 55.7 52.8 50.6C55.3 45.5 56.0 44.7 60.2 40.7C64.5 36.6 64.1 37.3 68.5 35.4C73.0 33.4 72.9 32.7 76.8 33.5C80.8 34.4 80.4 35.1 83.5 38.5C86.6 42.0 85.6 41.5 88.5 46.5C91.3 51.5 91.0 51.3 94.3 57.3C97.5 63.2 96.9 62.1 100.6 68.9C104.3 75.7 106.1 73.8 108.1 82.8C110.2 91.9 123.7 98.3 108.1 102.8C92.6 107.4 65.3 106.0 49.7 99.8C34.1 93.7 49.5 88.1 49.7 79.8Z" fill="url(#bk)" filter="url(#bl0)" /><path d="M49.7 79.8C49.9 71.6 50.0 74.2 50.3 68.9C50.6 63.5 50.1 64.6 50.8 59.8C51.5 54.9 50.3 55.7 52.8 50.6C55.3 45.5 56.0 44.7 60.2 40.7C64.5 36.6 64.1 37.3 68.5 35.4C73.0 33.4 72.9 32.7 76.8 33.5C80.8 34.4 80.4 35.1 83.5 38.5C86.6 42.0 85.6 41.5 88.5 46.5C91.3 51.5 91.0 51.3 94.3 57.3C97.5 63.2 96.9 62.1 100.6 68.9C104.3 75.7 106.1 73.8 108.1 82.8C110.2 91.9 123.7 98.3 108.1 102.8C92.6 107.4 65.3 106.0 49.7 99.8C34.1 93.7 49.5 88.1 49.7 79.8Z" fill="url(#dt)" opacity=".55"/><path d="M60.2 40.7C61.2 39.4 65.8 36.5 68.5 35.4C71.3 34.2 74.4 33.0 76.8 33.5C79.3 34.1 83.3 38.0 83.5 38.5C83.6 39.0 80.0 36.5 77.7 36.5C75.3 36.5 71.9 37.4 69.4 38.5C66.9 39.6 64.3 42.8 62.7 43.2C61.2 43.5 59.3 42.0 60.2 40.7Z" fill="#eef2e0" filter="url(#bl0)" opacity=".8"/><rect width="103.5" height="68.5" fill="url(#vg)"/></g><rect x=".5" y=".5" width="102.5" height="67.5" fill="none" stroke="#242424" stroke-width="1"/></svg></svg>
<svg style="left:0;top:0" width="723" height="508"><polygon points="207.60,470.50 208.58,472.85 211.12,473.06 209.18,474.71 209.77,477.19 207.60,475.87 205.43,477.19 206.02,474.71 204.08,473.06 206.62,472.85" fill="#f6a21e" stroke="#c9700f" stroke-width=".75" stroke-linejoin="round"/><polygon points="217.25,472.00 217.94,473.65 219.72,473.80 218.36,474.96 218.78,476.70 217.25,475.77 215.72,476.70 216.14,474.96 214.78,473.80 216.56,473.65" fill="#8f9190" stroke="#515352" stroke-width=".75" stroke-linejoin="round"/><polygon points="226.90,472.00 227.59,473.65 229.37,473.80 228.01,474.96 228.43,476.70 226.90,475.77 225.37,476.70 225.79,474.96 224.43,473.80 226.21,473.65" fill="#8f9190" stroke="#515352" stroke-width=".75" stroke-linejoin="round"/><polygon points="236.55,472.00 237.24,473.65 239.02,473.80 237.66,474.96 238.08,476.70 236.55,475.77 235.02,476.70 235.44,474.96 234.08,473.80 235.86,473.65" fill="#8f9190" stroke="#515352" stroke-width=".75" stroke-linejoin="round"/><polygon points="246.20,472.00 246.89,473.65 248.67,473.80 247.31,474.96 247.73,476.70 246.20,475.77 244.67,476.70 245.09,474.96 243.73,473.80 245.51,473.65" fill="#8f9190" stroke="#515352" stroke-width=".75" stroke-linejoin="round"/></svg>
<span class="t" id="t44" style="left:203.40px;top:480.86px;font-size:8.2px;color:#1a1a1a;letter-spacing:-0.580px;">10/3/2012 17:11</span>
<svg style="left:0;top:0" width="723" height="508"><polygon points="331.80,470.50 332.78,472.85 335.32,473.06 333.38,474.71 333.97,477.19 331.80,475.87 329.63,477.19 330.22,474.71 328.28,473.06 330.82,472.85" fill="#f6a21e" stroke="#c9700f" stroke-width=".75" stroke-linejoin="round"/><polygon points="341.45,472.00 342.14,473.65 343.92,473.80 342.56,474.96 342.98,476.70 341.45,475.77 339.92,476.70 340.34,474.96 338.98,473.80 340.76,473.65" fill="#8f9190" stroke="#515352" stroke-width=".75" stroke-linejoin="round"/><polygon points="351.10,472.00 351.79,473.65 353.57,473.80 352.21,474.96 352.63,476.70 351.10,475.77 349.57,476.70 349.99,474.96 348.63,473.80 350.41,473.65" fill="#8f9190" stroke="#515352" stroke-width=".75" stroke-linejoin="round"/><polygon points="360.75,472.00 361.44,473.65 363.22,473.80 361.86,474.96 362.28,476.70 360.75,475.77 359.22,476.70 359.64,474.96 358.28,473.80 360.06,473.65" fill="#8f9190" stroke="#515352" stroke-width=".75" stroke-linejoin="round"/><polygon points="370.40,472.00 371.09,473.65 372.87,473.80 371.51,474.96 371.93,476.70 370.40,475.77 368.87,476.70 369.29,474.96 367.93,473.80 369.71,473.65" fill="#8f9190" stroke="#515352" stroke-width=".75" stroke-linejoin="round"/></svg>
<span class="t" id="t45" style="left:327.60px;top:480.86px;font-size:8.2px;color:#1a1a1a;letter-spacing:-0.580px;">10/3/2012 17:11</span>
<svg style="left:0;top:0" width="723" height="508"><polygon points="456.10,472.00 456.79,473.65 458.57,473.80 457.21,474.96 457.63,476.70 456.10,475.77 454.57,476.70 454.99,474.96 453.63,473.80 455.41,473.65" fill="#8f9190" stroke="#515352" stroke-width=".75" stroke-linejoin="round"/><polygon points="465.75,472.00 466.44,473.65 468.22,473.80 466.86,474.96 467.28,476.70 465.75,475.77 464.22,476.70 464.64,474.96 463.28,473.80 465.06,473.65" fill="#8f9190" stroke="#515352" stroke-width=".75" stroke-linejoin="round"/><polygon points="475.40,472.00 476.09,473.65 477.87,473.80 476.51,474.96 476.93,476.70 475.40,475.77 473.87,476.70 474.29,474.96 472.93,473.80 474.71,473.65" fill="#8f9190" stroke="#515352" stroke-width=".75" stroke-linejoin="round"/><polygon points="485.05,472.00 485.74,473.65 487.52,473.80 486.16,474.96 486.58,476.70 485.05,475.77 483.52,476.70 483.94,474.96 482.58,473.80 484.36,473.65" fill="#8f9190" stroke="#515352" stroke-width=".75" stroke-linejoin="round"/><polygon points="494.70,472.00 495.39,473.65 497.17,473.80 495.81,474.96 496.23,476.70 494.70,475.77 493.17,476.70 493.59,474.96 492.23,473.80 494.01,473.65" fill="#8f9190" stroke="#515352" stroke-width=".75" stroke-linejoin="round"/></svg>
<span class="t" id="t46" style="left:451.90px;top:480.86px;font-size:8.2px;color:#1a1a1a;letter-spacing:-0.580px;">10/3/2012 17:11</span>
<svg style="left:0;top:0" width="723" height="508"><polygon points="580.30,472.00 580.99,473.65 582.77,473.80 581.41,474.96 581.83,476.70 580.30,475.77 578.77,476.70 579.19,474.96 577.83,473.80 579.61,473.65" fill="#8f9190" stroke="#515352" stroke-width=".75" stroke-linejoin="round"/><polygon points="589.95,472.00 590.64,473.65 592.42,473.80 591.06,474.96 591.48,476.70 589.95,475.77 588.42,476.70 588.84,474.96 587.48,473.80 589.26,473.65" fill="#8f9190" stroke="#515352" stroke-width=".75" stroke-linejoin="round"/><polygon points="599.60,472.00 600.29,473.65 602.07,473.80 600.71,474.96 601.13,476.70 599.60,475.77 598.07,476.70 598.49,474.96 597.13,473.80 598.91,473.65" fill="#8f9190" stroke="#515352" stroke-width=".75" stroke-linejoin="round"/><polygon points="609.25,472.00 609.94,473.65 611.72,473.80 610.36,474.96 610.78,476.70 609.25,475.77 607.72,476.70 608.14,474.96 606.78,473.80 608.56,473.65" fill="#8f9190" stroke="#515352" stroke-width=".75" stroke-linejoin="round"/><polygon points="618.90,472.00 619.59,473.65 621.37,473.80 620.01,474.96 620.43,476.70 618.90,475.77 617.37,476.70 617.79,474.96 616.43,473.80 618.21,473.65" fill="#8f9190" stroke="#515352" stroke-width=".75" stroke-linejoin="round"/></svg>
<span class="t" id="t47" style="left:576.10px;top:480.86px;font-size:8.2px;color:#1a1a1a;letter-spacing:-0.580px;">10/3/2012 17:11</span>
<svg style="left:294px;top:480px" width="11" height="9"><svg x="0.20" y="0.00" width="9.7" height="7.6" viewBox="0 0 11 7.7" overflow="visible"><rect width="11" height="7.7" rx="0.5" fill="#70a43e"/><rect x="0" y="0" width="2.1" height="7.7" fill="#5a8f36"/><rect x="1.9" y="0" width=".5" height="7.7" fill="#4a7a2c"/><rect x="2.4" y="0.3" width="8.3" height="2.6" fill="#8cbc5a" opacity=".6"/><rect x="4.2" y="3" width="3.6" height="1.4" fill="#fff"/></svg></svg>
<svg style="left:418px;top:480px" width="12" height="9"><svg x="0.40" y="0.00" width="9.7" height="7.6" viewBox="0 0 11 7.7" overflow="visible"><rect width="11" height="7.7" rx="0.5" fill="#70a43e"/><rect x="0" y="0" width="2.1" height="7.7" fill="#5a8f36"/><rect x="1.9" y="0" width=".5" height="7.7" fill="#4a7a2c"/><rect x="2.4" y="0.3" width="8.3" height="2.6" fill="#8cbc5a" opacity=".6"/><rect x="4.2" y="3" width="3.6" height="1.4" fill="#fff"/></svg></svg>
<svg style="left:530px;top:480px" width="12" height="9"><svg x="0.60" y="0.00" width="9.7" height="7.6" viewBox="0 0 11 7.7" overflow="visible"><rect width="11" height="7.7" rx="0.5" fill="#70a43e"/><rect x="0" y="0" width="2.1" height="7.7" fill="#5a8f36"/><rect x="1.9" y="0" width=".5" height="7.7" fill="#4a7a2c"/><rect x="2.4" y="0.3" width="8.3" height="2.6" fill="#8cbc5a" opacity=".6"/><rect x="4.2" y="3" width="3.6" height="1.4" fill="#fff"/></svg></svg>
<svg style="left:655px;top:480px" width="9.7" height="7.6" viewBox="0 0 11 7.7"><rect width="11" height="7.7" rx="0.5" fill="#70a43e"/><rect x="0" y="0" width="2.1" height="7.7" fill="#5a8f36"/><rect x="1.9" y="0" width=".5" height="7.7" fill="#4a7a2c"/><rect x="2.4" y="0.3" width="8.3" height="2.6" fill="#8cbc5a" opacity=".6"/><rect x="4.2" y="3" width="3.6" height="1.4" fill="#fff"/></svg>
<svg style="left:546px;top:479px" width="8" height="10"><svg x="0.80" y="0.50" width="5.6" height="8" viewBox="0 0 5.6 8" overflow="visible"><path d="M0.2 7.9 V3 Q0.2 2.4 0.7 1.9 L2.4 0.3 Q2.8 0 3.2 0.3 L4.9 1.9 Q5.4 2.4 5.4 3 V7.9Z" fill="#5f9fe4"/><path d="M0.6 7.5 V3 L2.8 0.8 V7.5Z" fill="#7db3ec" opacity=".6"/></svg></svg>
<svg style="left:670px;top:479px" width="8" height="10"><svg x="0.90" y="0.50" width="5.6" height="8" viewBox="0 0 5.6 8" overflow="visible"><path d="M0.2 7.9 V3 Q0.2 2.4 0.7 1.9 L2.4 0.3 Q2.8 0 3.2 0.3 L4.9 1.9 Q5.4 2.4 5.4 3 V7.9Z" fill="#5f9fe4"/><path d="M0.6 7.5 V3 L2.8 0.8 V7.5Z" fill="#7db3ec" opacity=".6"/></svg></svg>
<svg style="left:0;top:0" width="723" height="508" fill="#c4125c"><rect x="394.90" y="102.95" width="2.1" height="2.1" rx=".5"/><rect x="394.90" y="108.95" width="2.1" height="2.1" rx=".5"/><rect x="394.90" y="114.95" width="2.1" height="2.1" rx=".5"/><rect x="394.90" y="120.95" width="2.1" height="2.1" rx=".5"/><rect x="394.90" y="126.95" width="2.1" height="2.1" rx=".5"/><rect x="394.90" y="132.95" width="2.1" height="2.1" rx=".5"/><rect x="394.90" y="138.95" width="2.1" height="2.1" rx=".5"/><rect x="394.90" y="144.95" width="2.1" height="2.1" rx=".5"/><rect x="394.90" y="150.95" width="2.1" height="2.1" rx=".5"/><rect x="394.90" y="156.95" width="2.1" height="2.1" rx=".5"/><rect x="394.90" y="162.95" width="2.1" height="2.1" rx=".5"/><rect x="394.90" y="168.95" width="2.1" height="2.1" rx=".5"/><rect x="394.90" y="174.95" width="2.1" height="2.1" rx=".5"/><rect x="394.90" y="180.95" width="2.1" height="2.1" rx=".5"/><rect x="394.90" y="186.95" width="2.1" height="2.1" rx=".5"/><rect x="394.90" y="192.95" width="2.1" height="2.1" rx=".5"/><rect x="394.90" y="198.95" width="2.1" height="2.1" rx=".5"/><rect x="394.90" y="204.95" width="2.1" height="2.1" rx=".5"/><rect x="394.90" y="210.95" width="2.1" height="2.1" rx=".5"/><rect x="398.75" y="210.75" width="2.1" height="2.1" rx=".5"/><rect x="404.75" y="210.75" width="2.1" height="2.1" rx=".5"/><rect x="410.75" y="210.75" width="2.1" height="2.1" rx=".5"/><rect x="416.75" y="210.75" width="2.1" height="2.1" rx=".5"/><rect x="422.75" y="210.75" width="2.1" height="2.1" rx=".5"/><rect x="428.75" y="210.75" width="2.1" height="2.1" rx=".5"/><rect x="434.75" y="210.75" width="2.1" height="2.1" rx=".5"/><rect x="440.75" y="210.75" width="2.1" height="2.1" rx=".5"/><rect x="446.75" y="210.75" width="2.1" height="2.1" rx=".5"/><rect x="452.75" y="210.75" width="2.1" height="2.1" rx=".5"/><rect x="458.75" y="210.75" width="2.1" height="2.1" rx=".5"/><rect x="464.75" y="210.75" width="2.1" height="2.1" rx=".5"/><rect x="470.75" y="210.75" width="2.1" height="2.1" rx=".5"/><rect x="476.75" y="210.75" width="2.1" height="2.1" rx=".5"/><rect x="477.05" y="213.95" width="2.1" height="2.1" rx=".5"/><rect x="477.05" y="219.95" width="2.1" height="2.1" rx=".5"/><rect x="477.05" y="225.95" width="2.1" height="2.1" rx=".5"/><rect x="477.05" y="231.95" width="2.1" height="2.1" rx=".5"/><rect x="477.05" y="237.95" width="2.1" height="2.1" rx=".5"/><rect x="477.05" y="243.95" width="2.1" height="2.1" rx=".5"/><rect x="477.05" y="249.95" width="2.1" height="2.1" rx=".5"/><rect x="477.05" y="255.95" width="2.1" height="2.1" rx=".5"/><rect x="477.05" y="261.95" width="2.1" height="2.1" rx=".5"/><rect x="477.05" y="267.95" width="2.1" height="2.1" rx=".5"/><rect x="477.05" y="273.95" width="2.1" height="2.1" rx=".5"/><rect x="477.05" y="279.95" width="2.1" height="2.1" rx=".5"/><rect x="477.05" y="285.95" width="2.1" height="2.1" rx=".5"/><rect x="477.05" y="291.95" width="2.1" height="2.1" rx=".5"/><rect x="477.05" y="297.95" width="2.1" height="2.1" rx=".5"/><rect x="563.90" y="105.85" width="2.1" height="2.1" rx=".5"/><rect x="563.90" y="111.85" width="2.1" height="2.1" rx=".5"/><rect x="563.90" y="117.85" width="2.1" height="2.1" rx=".5"/><rect x="563.90" y="123.85" width="2.1" height="2.1" rx=".5"/><rect x="563.90" y="129.85" width="2.1" height="2.1" rx=".5"/><rect x="563.90" y="135.85" width="2.1" height="2.1" rx=".5"/><rect x="563.90" y="141.85" width="2.1" height="2.1" rx=".5"/><rect x="563.90" y="147.85" width="2.1" height="2.1" rx=".5"/><rect x="563.90" y="153.85" width="2.1" height="2.1" rx=".5"/><rect x="563.90" y="159.85" width="2.1" height="2.1" rx=".5"/><rect x="563.90" y="165.85" width="2.1" height="2.1" rx=".5"/><rect x="563.90" y="171.85" width="2.1" height="2.1" rx=".5"/><rect x="563.90" y="177.85" width="2.1" height="2.1" rx=".5"/><rect x="563.90" y="183.85" width="2.1" height="2.1" rx=".5"/><rect x="563.90" y="189.85" width="2.1" height="2.1" rx=".5"/><rect x="563.90" y="195.85" width="2.1" height="2.1" rx=".5"/><rect x="563.90" y="201.85" width="2.1" height="2.1" rx=".5"/><rect x="563.90" y="207.85" width="2.1" height="2.1" rx=".5"/><rect x="563.90" y="213.85" width="2.1" height="2.1" rx=".5"/><rect x="563.90" y="219.85" width="2.1" height="2.1" rx=".5"/><rect x="563.90" y="225.85" width="2.1" height="2.1" rx=".5"/><rect x="563.90" y="231.85" width="2.1" height="2.1" rx=".5"/><rect x="563.90" y="237.85" width="2.1" height="2.1" rx=".5"/><rect x="563.90" y="243.85" width="2.1" height="2.1" rx=".5"/><rect x="563.90" y="249.85" width="2.1" height="2.1" rx=".5"/><rect x="563.90" y="255.85" width="2.1" height="2.1" rx=".5"/><rect x="563.90" y="261.85" width="2.1" height="2.1" rx=".5"/><rect x="563.90" y="267.85" width="2.1" height="2.1" rx=".5"/><rect x="563.90" y="273.85" width="2.1" height="2.1" rx=".5"/><rect x="563.90" y="279.85" width="2.1" height="2.1" rx=".5"/><rect x="563.90" y="285.85" width="2.1" height="2.1" rx=".5"/><rect x="563.90" y="291.85" width="2.1" height="2.1" rx=".5"/><rect x="563.90" y="297.85" width="2.1" height="2.1" rx=".5"/><rect x="544.85" y="318.45" width="2.1" height="2.1" rx=".5"/><rect x="544.85" y="324.47" width="2.1" height="2.1" rx=".5"/><rect x="544.85" y="330.49" width="2.1" height="2.1" rx=".5"/><rect x="544.85" y="336.51" width="2.1" height="2.1" rx=".5"/><rect x="544.85" y="342.53" width="2.1" height="2.1" rx=".5"/><rect x="544.85" y="348.55" width="2.1" height="2.1" rx=".5"/><rect x="544.85" y="354.57" width="2.1" height="2.1" rx=".5"/><rect x="544.85" y="360.59" width="2.1" height="2.1" rx=".5"/><rect x="544.85" y="366.61" width="2.1" height="2.1" rx=".5"/><rect x="544.85" y="372.63" width="2.1" height="2.1" rx=".5"/><rect x="544.85" y="378.65" width="2.1" height="2.1" rx=".5"/><rect x="544.85" y="384.67" width="2.1" height="2.1" rx=".5"/><rect x="544.85" y="390.69" width="2.1" height="2.1" rx=".5"/><rect x="544.85" y="396.71" width="2.1" height="2.1" rx=".5"/><rect x="544.85" y="402.73" width="2.1" height="2.1" rx=".5"/><rect x="544.85" y="408.75" width="2.1" height="2.1" rx=".5"/><rect x="544.85" y="414.77" width="2.1" height="2.1" rx=".5"/><rect x="544.85" y="420.79" width="2.1" height="2.1" rx=".5"/><rect x="544.85" y="426.81" width="2.1" height="2.1" rx=".5"/><rect x="544.85" y="432.83" width="2.1" height="2.1" rx=".5"/><rect x="544.85" y="438.85" width="2.1" height="2.1" rx=".5"/><rect x="544.85" y="444.87" width="2.1" height="2.1" rx=".5"/><rect x="544.85" y="450.89" width="2.1" height="2.1" rx=".5"/><rect x="544.85" y="456.91" width="2.1" height="2.1" rx=".5"/><rect x="544.85" y="462.93" width="2.1" height="2.1" rx=".5"/><rect x="544.85" y="468.95" width="2.1" height="2.1" rx=".5"/><rect x="544.85" y="474.97" width="2.1" height="2.1" rx=".5"/><rect x="544.85" y="480.99" width="2.1" height="2.1" rx=".5"/><rect x="551.05" y="483.65" width="2.1" height="2.1" rx=".5"/><rect x="557.15" y="483.65" width="2.1" height="2.1" rx=".5"/><rect x="563.15" y="483.65" width="2.1" height="2.1" rx=".5"/></svg>
</body></html>
